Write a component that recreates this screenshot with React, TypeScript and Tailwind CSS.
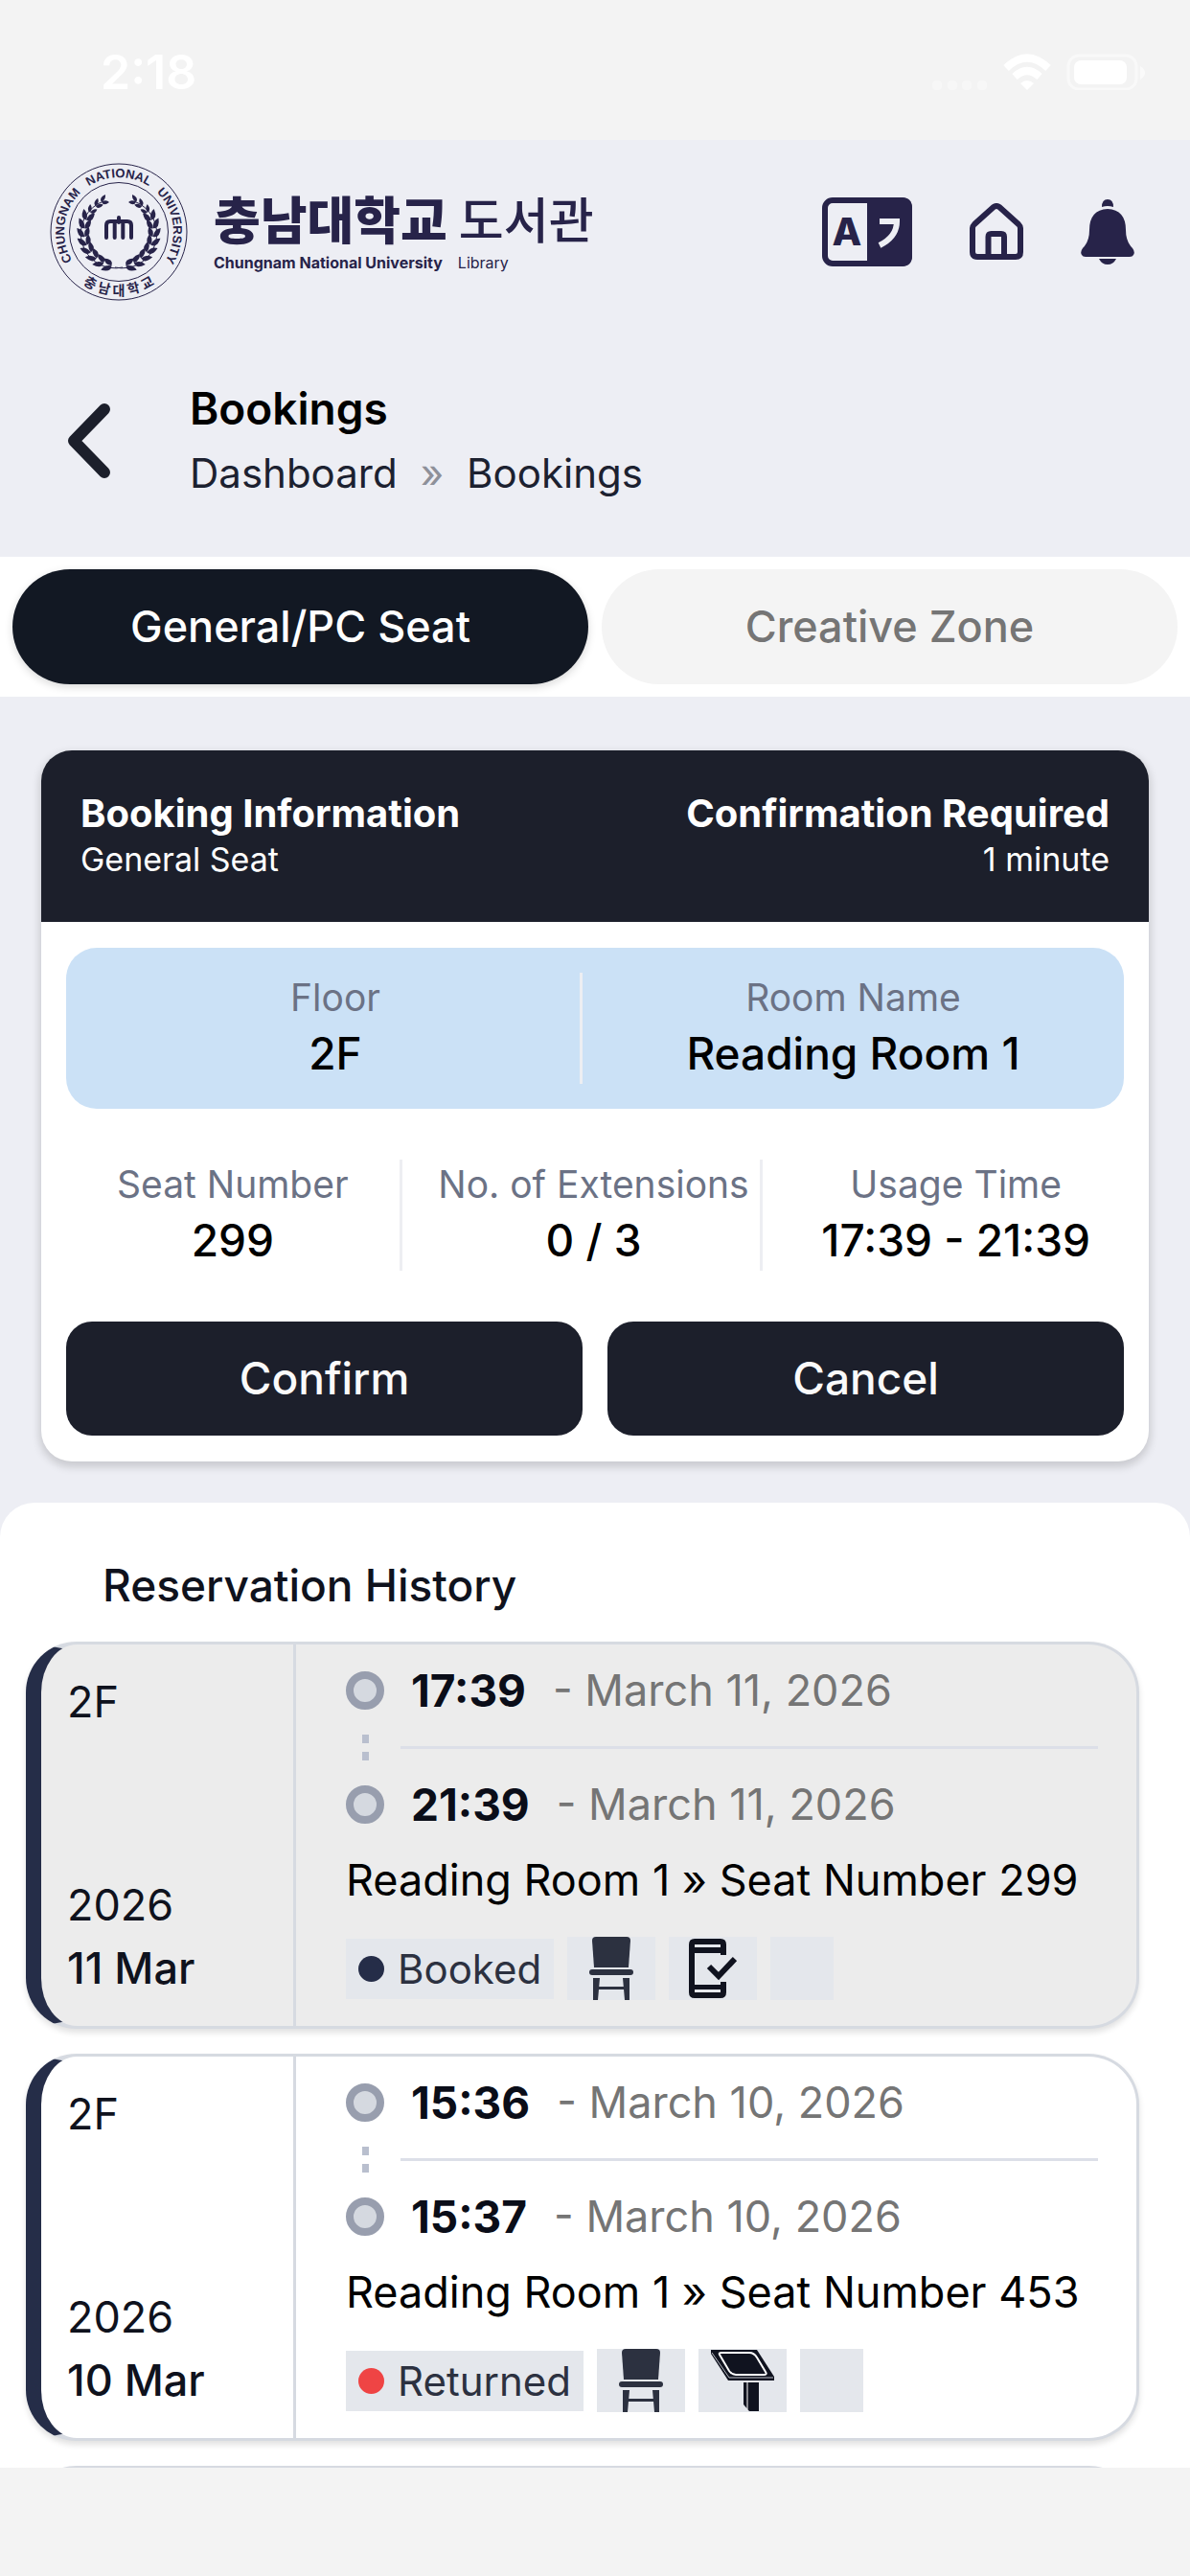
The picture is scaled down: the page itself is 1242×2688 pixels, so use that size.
import React, { useState } from "react";

interface HistoryItem {
  floor: string;
  year: string;
  day: string;
  start: string;
  end: string;
  date: string;
  seat: string;
  status: string;
  icon: "mobile" | "kiosk";
  active: boolean;
}

const history: HistoryItem[] = [
  {
    floor: "2F",
    year: "2026",
    day: "11 Mar",
    start: "17:39",
    end: "21:39",
    date: "March 11, 2026",
    seat: "Reading Room 1 » Seat Number 299",
    status: "Booked",
    icon: "mobile",
    active: true,
  },
  {
    floor: "2F",
    year: "2026",
    day: "10 Mar",
    start: "15:36",
    end: "15:37",
    date: "March 10, 2026",
    seat: "Reading Room 1 » Seat Number 453",
    status: "Returned",
    icon: "kiosk",
    active: false,
  },
];

const laurelAngles = [12, 26, 40, 54, 68, 82, 96, 110, 124, 138, 150];

const Laurel = () => (
  <g>
    <path d="M76 109 A36 36 0 0 1 56 40" fill="none" stroke="#272349" strokeWidth="1" />
    {laurelAngles.map((a) => {
      const rad = (a * Math.PI) / 180;
      const x = 72 - 36 * Math.sin(rad);
      const y = 72 + 36 * Math.cos(rad);
      const size = a > 120 ? 0.8 : 1.1;
      return (
        <g key={a} transform={`translate(${x} ${y}) scale(${size})`} fill="#272349">
          <path d="M0 0Q3 -6 11 0Q6 4 0 0" transform={`rotate(${180 + a - 34})`} />
          <path d="M0 0Q6 -4 10 0Q3 6 0 0" transform={`rotate(${180 + a + 32})`} />
        </g>
      );
    })}
  </g>
);

const Emblem = () => (
  <svg className="size-36 shrink-0" viewBox="0 0 144 144" aria-hidden="true">
    <defs>
      <path id="ringTop" d="M72 129 A57 57 0 0 1 72 15 A57 57 0 0 1 72 129" />
      <path id="ringBottom" d="M6 72 A66 66 0 0 0 138 72" />
    </defs>
    <circle cx="72" cy="72" r="71" fill="none" stroke="#272349" strokeWidth="1" />
    <circle cx="72" cy="72" r="51.5" fill="none" stroke="#272349" strokeWidth="1" />
    <g className="[font-family:'Liberation_Sans',sans-serif]" fill="#272349" fontSize="13" fontWeight="700" textAnchor="middle">
      <text><textPath href="#ringTop" startOffset="27%">CHUNGNAM</textPath></text>
      <text><textPath href="#ringTop" startOffset="50%">NATIONAL</textPath></text>
      <text><textPath href="#ringTop" startOffset="73%">UNIVERSITY</textPath></text>
    </g>
    <text className="[font-family:'Liberation_Sans','Noto_Sans_CJK_KR',sans-serif]" fill="#272349" fontSize="14" fontWeight="700" textAnchor="middle">
      <textPath href="#ringBottom" startOffset="50%">충 남 대 학 교</textPath>
    </text>
    <Laurel />
    <g transform="translate(144 0) scale(-1 1)">
      <Laurel />
    </g>
    <path
      d="M59 78V65Q59 61 63 61H81Q85 61 85 65V78M67.7 61V78M76.3 61V78M72 57V62"
      fill="none"
      stroke="#272349"
      strokeWidth="4"
      strokeLinecap="round"
    />
  </svg>
);

const TranslateIcon = () => (
  <svg className="h-[72px] w-[94px]" viewBox="0 0 94 72" aria-hidden="true">
    <rect x="3" y="3" width="88" height="66" rx="8" fill="none" stroke="#272349" strokeWidth="6" />
    <path d="M47 0H83Q94 0 94 11V61Q94 72 83 72H47Z" fill="#272349" />
    <text x="26" y="50" className="[font-family:Inter,sans-serif]" fontSize="40" fontWeight="800" textAnchor="middle" fill="#272349">A</text>
    <path d="M60 25H78Q78 41 60 50" fill="none" stroke="#edeef4" strokeWidth="6" />
  </svg>
);

const HomeIcon = () => (
  <svg className="h-[60px] w-14" viewBox="0 0 56 60" fill="none" stroke="#272349" strokeWidth="6" strokeLinejoin="round" aria-hidden="true">
    <path d="M3 26Q3 24 5 22L25 4Q28 2 31 4L51 22Q53 24 53 26V51Q53 56 48 56H8Q3 56 3 51Z" />
    <path d="M19.500 56V35Q19.500 32 22.500 32H33Q36 32 36 35V56" />
  </svg>
);

const BellIcon = () => (
  <svg className="h-[68px] w-14" viewBox="0 0 56 68" fill="#272349" aria-hidden="true">
    <path d="M22 8Q22 0 28 0Q34 0 34 8Q28 6 22 8Z" />
    <path d="M28 10Q47 11 47 32Q47 44 54 51Q57 55 55 58Q54 60 51 60H5Q2 60 1 58Q-1 55 2 51Q9 44 9 32Q9 11 28 10Z" />
    <path d="M19 62H37Q34 68 28 68Q22 68 19 62Z" />
  </svg>
);

const ChairIcon = () => (
  <svg className="h-[66px] w-[46px]" viewBox="0 0 46 66" fill="#2c3140" aria-hidden="true">
    <path d="M7 0H39Q43 0 43 4L41 32H5L3 4Q3 0 7 0Z" />
    <rect x="0" y="34" width="46" height="6" rx="3" />
    <path d="M4 43H11L9 66H4ZM35 43H42V66H37Z" />
    <rect x="9" y="52" width="28" height="3" />
  </svg>
);

const MobileIcon = () => (
  <svg className="h-[66px] w-[50px]" viewBox="0 0 50 66" aria-hidden="true">
    <path
      d="M0 8Q0 2 6 2H33Q39 2 39 8V19H33V17H6V50H33V47H39V58Q39 64 33 64H6Q0 64 0 58Z M6 8V11H33V8ZM6 55V58H33V55Z"
      fill="#10131f"
      fillRule="evenodd"
    />
    <path d="M21 31L31 41L48 23" fill="none" stroke="#10131f" strokeWidth="6" />
  </svg>
);

const KioskIcon = () => (
  <svg className="h-[66px] w-[68px]" viewBox="0 0 68 66" aria-hidden="true">
    <path d="M1 1H49L67 29V33H19L1 5Z" fill="#10131f" />
    <path d="M2 4L20 30H66" fill="none" stroke="#b9bcc4" strokeWidth="1" />
    <path d="M10 6Q9 4 12 4H41Q46 4 49 9L58 24Q60 27 56 27H27Q23 27 20 23Z" fill="none" stroke="#ffffff" strokeWidth="2" />
    <path d="M35 35H51V65H41L35 58Z" fill="#10131f" />
    <path d="M39 35V63" stroke="#ffffff" strokeWidth="1" />
  </svg>
);

const StatusBar = () => (
  <div className="flex h-[146px] shrink-0 items-center justify-between bg-[#f3f3f3] pt-1 pr-[47px] pl-[105px] text-white">
    <span className="text-[50px] leading-none font-semibold">2:18</span>
    <svg className="h-[38px] w-[222px]" viewBox="0 0 222 38" fill="#ffffff" aria-hidden="true">
      <g opacity="0.35">
        <rect x="0" y="28" width="10" height="10" rx="4" />
        <rect x="16" y="28" width="10" height="10" rx="4" />
        <rect x="31" y="28" width="10" height="10" rx="4" />
        <rect x="47" y="28" width="10" height="10" rx="4" />
      </g>
      <g fill="none" stroke="#ffffff" strokeWidth="8">
        <path d="M77 15Q99 -6 121 15" />
        <path d="M86 24Q99 12 112 24" />
      </g>
      <path d="M92 31Q99 25 106 31L99 38Z" />
      <rect x="142" y="2" width="71" height="35" rx="11" fill="none" stroke="#ffffff" strokeOpacity="0.5" strokeWidth="3" />
      <rect x="148" y="7" width="55" height="25" rx="7" />
      <path d="M217 13Q222 16 222 20Q222 24 217 27Z" opacity="0.6" />
    </svg>
  </div>
);

const Header = () => (
  <header className="shrink-0">
    <div className="flex h-[191px] items-center justify-between pr-[58px] pl-[52px]">
      <a href="#" className="flex items-center gap-[27px] text-[#272349]">
        <Emblem />
        <div>
          <div className="flex items-center gap-3 [font-family:'Liberation_Sans','Noto_Sans_CJK_KR',sans-serif] leading-[64px]">
            <span className="text-[53px] font-black">충남대학교</span>
            <span className="text-[51px] font-medium">도서관</span>
          </div>
          <div className="flex gap-4 text-[16px] leading-5">
            <span className="font-bold">Chungnam National University</span>
            <span>Library</span>
          </div>
        </div>
      </a>
      <div className="flex items-center gap-[60px]">
        <button type="button" aria-label="Language"><TranslateIcon /></button>
        <button type="button" aria-label="Home"><HomeIcon /></button>
        <button type="button" aria-label="Notifications"><BellIcon /></button>
      </div>
    </div>
    <div className="flex items-center gap-[82px] pt-14 pb-[54px] pl-[70px]">
      <button type="button" aria-label="Back">
        <svg className="h-20 w-[46px]" viewBox="0 0 46 80" fill="none" stroke="#1c1f2b" strokeWidth="12" strokeLinecap="round" strokeLinejoin="round" aria-hidden="true">
          <path d="M39 7L7 40L39 73" />
        </svg>
      </button>
      <div className="leading-[67px]">
        <h1 className="text-[46px] font-semibold text-black">Bookings</h1>
        <nav className="flex gap-6 text-[42px] text-[#1c2130]">
          <a href="#">Dashboard</a>
          <span className="text-[#8e9099]">»</span>
          <a href="#">Bookings</a>
        </nav>
      </div>
    </div>
  </header>
);

interface InfoProps {
  label: string;
  value: string;
  divider?: boolean;
}

const Info: React.FC<InfoProps> = ({ label, value, divider }) => (
  <div className={divider ? "border-r-[3px] border-[#edeef2] text-center" : "text-center"}>
    <p className="text-[39px] leading-[52px] whitespace-nowrap text-[#6b7285]">{label}</p>
    <p className="text-[46px] leading-[64px] font-medium whitespace-nowrap text-black">{value}</p>
  </div>
);

const BookingCard = () => (
  <section className="mx-[43px] overflow-hidden rounded-[32px] bg-white shadow-[0_4px_8px_2px_rgba(0,0,0,0.15)]">
    <div className="flex justify-between bg-[#1c1f2b] px-[41px] pt-10 pb-[43px] text-white">
      <div>
        <h2 className="text-[40px] leading-[52px] font-bold">Booking Information</h2>
        <p className="text-[34px] leading-[44px]">General Seat</p>
      </div>
      <div className="text-right">
        <h2 className="text-[40px] leading-[52px] font-bold">Confirmation Required</h2>
        <p className="text-[34px] leading-[44px]">1 minute</p>
      </div>
    </div>
    <div className="px-[26px] py-[27px]">
      <div className="grid grid-cols-2 gap-[26px] rounded-[32px] bg-[#cbe1f6] p-[26px]">
        <Info label="Floor" value="2F" divider />
        <Info label="Room Name" value="Reading Room 1" />
      </div>
      <div className="grid grid-cols-3 gap-[26px] py-[53px]">
        <Info label="Seat Number" value="299" divider />
        <Info label="No. of Extensions" value="0 / 3" divider />
        <Info label="Usage Time" value="17:39 - 21:39" />
      </div>
      <div className="grid grid-cols-2 gap-[26px] text-[46px] font-medium text-[#fafafa]">
        <button type="button" className="h-[119px] rounded-[27px] bg-[#1c1f2b]">Confirm</button>
        <button type="button" className="h-[119px] rounded-[27px] bg-[#1c1f2b]">Cancel</button>
      </div>
    </div>
  </section>
);

const TimeRow = ({ time, date }: { time: string; date: string }) => (
  <div className="flex h-[66px] items-center text-[46px]">
    <span className="mr-7 size-10 rounded-full border-8 border-[#989eae] bg-[#d5d9e0]" />
    <span className="mr-7 font-bold text-[#0a0d18]">{time}</span>
    <span className="text-[45px] text-[#757575]">- {date}</span>
  </div>
);

const HistoryCard = ({ item }: { item: HistoryItem }) => (
  <article
    className={`flex h-[404px] shrink-0 rounded-[53px] border-[3px] border-l-[16px] border-[#d6dae1] border-l-[#252d48] shadow-[0_4px_6px_rgba(0,0,0,0.12)] ${
      item.active ? "bg-[#ececec]" : "bg-white"
    }`}
  >
    <div className="flex w-[266px] shrink-0 flex-col justify-between border-r-[3px] border-[#d6dae1] pt-[27px] pb-[27px] pl-[27px] text-[45px] leading-[66px] text-[#0f121d]">
      <p>{item.floor}</p>
      <div>
        <p>{item.year}</p>
        <p className="font-medium">{item.day}</p>
      </div>
    </div>
    <div className="min-w-0 flex-1 pt-[15px] pr-10 pl-[52px]">
      <TimeRow time={item.start} date={item.date} />
      <div className="flex h-[53px] items-center">
        <div className="flex w-10 flex-col items-center gap-[9px]">
          <span className="h-[9px] w-[7px] bg-[#b9bfce]" />
          <span className="h-[9px] w-[7px] bg-[#b9bfce]" />
        </div>
        <div className="ml-[17px] h-[3px] flex-1 bg-[#dcdfe8]" />
      </div>
      <TimeRow time={item.end} date={item.date} />
      <p className="mt-[13px] text-[45px] leading-[66px] whitespace-nowrap text-black">{item.seat}</p>
      <div className="mt-[26px] flex items-center gap-[14px]">
        <span className="flex h-[63px] items-center gap-[14px] bg-[#e4e7ec] px-[13px] text-[42px] text-[#2c3140]">
          <i className={item.active ? "size-[27px] rounded-full bg-[#252d48]" : "size-[27px] rounded-full bg-[#ef4444]"} />
          {item.status}
        </span>
        <span className="flex h-[66px] w-[92px] justify-center bg-[#e4e7ec]"><ChairIcon /></span>
        <span className="flex h-[66px] w-[92px] justify-center bg-[#e4e7ec]">
          {item.icon === "mobile" ? <MobileIcon /> : <KioskIcon />}
        </span>
        <span className="h-[66px] w-[66px] bg-[#e4e7ec]" />
      </div>
    </div>
  </article>
);

const App: React.FC = () => {
  const [tab, setTab] = useState("seat");
  const on = "flex-1 rounded-full bg-[#121823] text-white shadow-[0_3px_8px_rgba(0,0,0,0.15)]";
  const off = "flex-1 rounded-full bg-[#f4f4f4] text-[#757575]";

  return (
    <div className="flex h-screen flex-col bg-[#edeef4] [font-family:Inter,'Noto_Sans_CJK_KR',sans-serif]">
      <StatusBar />
      <Header />
      <div className="flex h-[146px] shrink-0 gap-[14px] bg-white p-[13px] text-[45px] font-medium">
        <button type="button" className={tab === "seat" ? on : off} onClick={() => setTab("seat")}>
          General/PC Seat
        </button>
        <button type="button" className={tab === "zone" ? on : off} onClick={() => setTab("zone")}>
          Creative Zone
        </button>
      </div>
      <main className="min-h-0 flex-1 overflow-y-auto pt-14 [scrollbar-width:none]">
        <BookingCard />
        <section className="mt-[43px] rounded-t-[36px] bg-white pt-[53px] pr-[53px] pl-[27px]">
          <h2 className="pl-20 text-[46px] leading-[66px] font-medium text-[#0f121d]">Reservation History</h2>
          <div className="mt-[26px] flex flex-col gap-[26px] pb-6">
            {history.map((item) => (
              <HistoryCard key={item.day} item={item} />
            ))}
            <div className="h-[404px] rounded-[53px] border-[3px] border-[#d6dae1]" />
          </div>
        </section>
      </main>
      <div className="h-[113px] shrink-0 bg-[#f3f3f3]" />
    </div>
  );
};

export default App;
